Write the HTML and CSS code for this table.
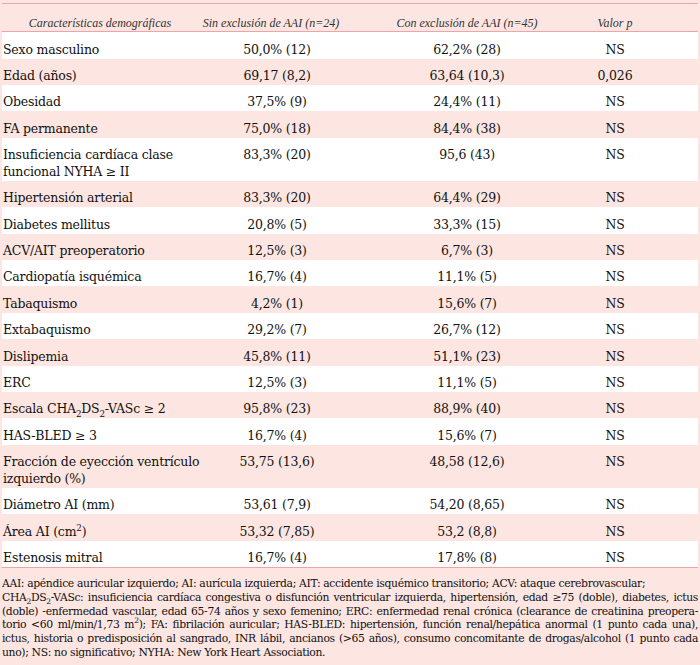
FILE: index.html
```html
<!DOCTYPE html>
<html lang="es">
<head>
<meta charset="utf-8">
<link rel="stylesheet" href="styles.css">
</head>
<body>
<div class="page">
  <div class="table">
    <div class="row head">
      <div class="c1">Características demográficas</div>
      <div class="c2">Sin exclusión de AAI (n=24)</div>
      <div class="c3">Con exclusión de AAI (n=45)</div>
      <div class="c4">Valor p</div>
    </div>
    <div class="row w"><div class="c1">Sexo masculino</div><div class="c2">50,0% (12)</div><div class="c3">62,2% (28)</div><div class="c4">NS</div></div>
    <div class="row p"><div class="c1">Edad (años)</div><div class="c2">69,17 (8,2)</div><div class="c3">63,64 (10,3)</div><div class="c4">0,026</div></div>
    <div class="row w"><div class="c1">Obesidad</div><div class="c2">37,5% (9)</div><div class="c3">24,4% (11)</div><div class="c4">NS</div></div>
    <div class="row p"><div class="c1">FA permanente</div><div class="c2">75,0% (18)</div><div class="c3">84,4% (38)</div><div class="c4">NS</div></div>
    <div class="row w"><div class="c1">Insuficiencia cardíaca clase<br>funcional NYHA ≥ II</div><div class="c2">83,3% (20)</div><div class="c3">95,6 (43)</div><div class="c4">NS</div></div>
    <div class="row p"><div class="c1">Hipertensión arterial</div><div class="c2">83,3% (20)</div><div class="c3">64,4% (29)</div><div class="c4">NS</div></div>
    <div class="row w"><div class="c1">Diabetes mellitus</div><div class="c2">20,8% (5)</div><div class="c3">33,3% (15)</div><div class="c4">NS</div></div>
    <div class="row p"><div class="c1">ACV/AIT preoperatorio</div><div class="c2">12,5% (3)</div><div class="c3">6,7% (3)</div><div class="c4">NS</div></div>
    <div class="row w"><div class="c1">Cardiopatía isquémica</div><div class="c2">16,7% (4)</div><div class="c3">11,1% (5)</div><div class="c4">NS</div></div>
    <div class="row p"><div class="c1">Tabaquismo</div><div class="c2">4,2% (1)</div><div class="c3">15,6% (7)</div><div class="c4">NS</div></div>
    <div class="row w"><div class="c1">Extabaquismo</div><div class="c2">29,2% (7)</div><div class="c3">26,7% (12)</div><div class="c4">NS</div></div>
    <div class="row p"><div class="c1">Dislipemia</div><div class="c2">45,8% (11)</div><div class="c3">51,1% (23)</div><div class="c4">NS</div></div>
    <div class="row w"><div class="c1">ERC</div><div class="c2">12,5% (3)</div><div class="c3">11,1% (5)</div><div class="c4">NS</div></div>
    <div class="row p"><div class="c1">Escala CHA<sub>2</sub>DS<sub>2</sub>-VASc ≥ 2</div><div class="c2">95,8% (23)</div><div class="c3">88,9% (40)</div><div class="c4">NS</div></div>
    <div class="row w"><div class="c1">HAS-BLED ≥ 3</div><div class="c2">16,7% (4)</div><div class="c3">15,6% (7)</div><div class="c4">NS</div></div>
    <div class="row p"><div class="c1">Fracción de eyección ventrículo<br>izquierdo (%)</div><div class="c2">53,75 (13,6)</div><div class="c3">48,58 (12,6)</div><div class="c4">NS</div></div>
    <div class="row w"><div class="c1">Diámetro AI (mm)</div><div class="c2">53,61 (7,9)</div><div class="c3">54,20 (8,65)</div><div class="c4">NS</div></div>
    <div class="row p"><div class="c1">Área AI (cm<sup>2</sup>)</div><div class="c2">53,32 (7,85)</div><div class="c3">53,2 (8,8)</div><div class="c4">NS</div></div>
    <div class="row w last"><div class="c1">Estenosis mitral</div><div class="c2">16,7% (4)</div><div class="c3">17,8% (8)</div><div class="c4">NS</div></div>
  </div>
  <div class="notes">
    <span class="ln">AAI: apéndice auricular izquierdo; AI: aurícula izquierda; AIT: accidente isquémico transitorio; ACV: ataque cerebrovascular;</span>
    <span class="ln j">CHA<sub>2</sub>DS<sub>2</sub>-VASc: insuficiencia cardíaca congestiva o disfunción ventricular izquierda, hipertensión, edad ≥75 (doble), diabetes, ictus</span>
    <span class="ln j">(doble) -enfermedad vascular, edad 65-74 años y sexo femenino; ERC: enfermedad renal crónica (clearance de creatinina preopera-</span>
    <span class="ln j">torio &lt;60 ml/min/1,73 m<sup>2</sup>); FA: fibrilación auricular; HAS-BLED: hipertensión, función renal/hepática anormal (1 punto cada una),</span>
    <span class="ln j">ictus, historia o predisposición al sangrado, INR lábil, ancianos (&gt;65 años), consumo concomitante de drogas/alcohol (1 punto cada</span>
    <span class="ln">uno); NS: no significativo; NYHA: New York Heart Association.</span>
  </div>
</div>
</body>
</html>
```

FILE: styles.css
```css
html, body {
  margin: 0;
  padding: 0;
  background: #fde6e1;
}
.page {
  width: 700px;
  height: 665px;
  overflow: hidden;
  background: #fde6e1;
  font-family: "DejaVu Serif", serif;
  color: #111;
}
.table {
  margin: 3px 2px 0 2px;
  border-top: 1.5px solid #f0a3a9;
  border-bottom: 1.5px solid #f0a3a9;
}
.row {
  display: grid;
  grid-template-columns: 196px 158px 184px 158px;
  font-size: 12.5px;
  letter-spacing: -0.2px;
  line-height: 16.8px;
}
.row > div {
  padding: 9.4px 0 0.2px 0;
  white-space: nowrap;
}
.row.w { background: #ffffff; }
.row.p { background: #fde6e1; }
.head {
  border-bottom: 1.5px solid #f0a3a9;
  font-family: "Liberation Serif", serif;
  font-style: italic;
  font-size: 12px;
  letter-spacing: 0;
  color: #333;
}
.head > div {
  padding: 10.5px 0 0 0;
  text-align: center;
}
.head .c2 { padding-right: 12px; }
.head .c4 { padding-right: 6px; }
.row .c2 { text-align: center; }
.row .c3 { text-align: center; padding-left: 38px; }
.row .c4 { text-align: center; padding-right: 8px; }
.row:not(.head) .c1 { padding-left: 1px; }
sub, sup {
  font-size: 0.7em;
  line-height: 0;
}
.notes {
  margin: 9px 2px 0 2px;
  font-size: 10.8px;
  letter-spacing: -0.35px;
  line-height: 13.8px;
}
.ln {
  display: block;
  white-space: nowrap;
}
.ln.j {
  text-align: justify;
  text-align-last: justify;
}
```
